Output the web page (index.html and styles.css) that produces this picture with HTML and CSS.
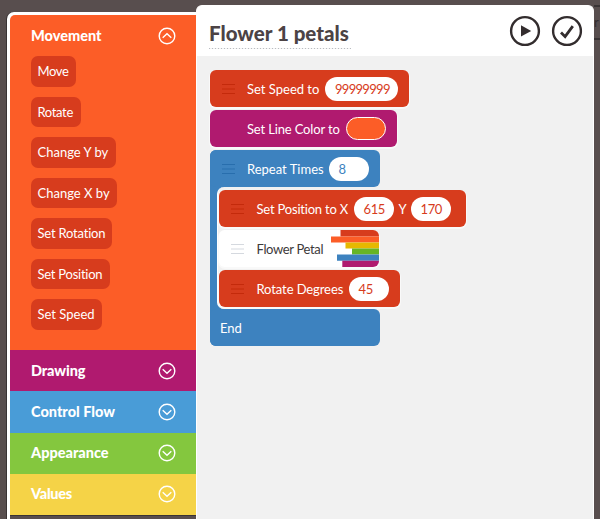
FILE: index.html
```
<!DOCTYPE html>
<html lang="en">
<head>
<meta charset="utf-8">
<title>Flower 1 petals</title>
<link rel="stylesheet" href="styles.css">
</head>
<body>
<svg class="defs" width="0" height="0">
  <symbol id="chevron" viewBox="0 0 18 18"><circle cx="9" cy="9" r="7.8"/><path d="M4.7 7.2 9 11.3l4.3-4.1"/></symbol>
  <symbol id="grip" viewBox="0 0 13 10"><path d="M0 .5h13M0 5h13M0 9.5h13"/></symbol>
</svg>
<div class="app">
  <aside class="sidebar">
    <section class="category movement">
      <h2 class="heading"><span>Movement</span><svg class="chevron up"><use href="#chevron"/></svg></h2>
      <div class="commands">
        <div class="command move">Move</div>
        <div class="command rotate">Rotate</div>
        <div class="command change-y">Change Y by</div>
        <div class="command change-x">Change X by</div>
        <div class="command set-rotation">Set Rotation</div>
        <div class="command set-position">Set Position</div>
        <div class="command set-speed">Set Speed</div>
      </div>
    </section>
    <section class="category drawing"><h2 class="heading"><span>Drawing</span><svg class="chevron"><use href="#chevron"/></svg></h2></section>
    <section class="category control"><h2 class="heading"><span>Control Flow</span><svg class="chevron"><use href="#chevron"/></svg></h2></section>
    <section class="category appearance"><h2 class="heading"><span>Appearance</span><svg class="chevron"><use href="#chevron"/></svg></h2></section>
    <section class="category values"><h2 class="heading"><span>Values</span><svg class="chevron"><use href="#chevron"/></svg></h2></section>
    <div class="sidebar-rest"></div>
  </aside>
  <main class="editor">
    <header class="toolbar">
      <h1 class="title">Flower 1 petals</h1>
      <svg class="action" viewBox="0 0 32 32"><circle cx="16" cy="16" r="13.9"/><path class="solid" d="M12 10.3v11.2L22.2 16z"/></svg>
      <svg class="action" viewBox="0 0 32 32"><circle cx="16" cy="16" r="13.9"/><path class="tick" d="m10 17.6 4.1 4.1 7.7-10.5"/></svg>
    </header>
    <div class="program">
      <div class="block red w-speed"><svg class="grip"><use href="#grip"/></svg><span class="label l-speed">Set Speed to</span><span class="field wide">99999999</span></div>
      <div class="block purple w-color"><span class="grip"></span><span class="label l-color">Set Line Color to</span><span class="field swatch"></span></div>
      <div class="loop">
        <div class="block blue w-repeat"><svg class="grip"><use href="#grip"/></svg><span class="label l-repeat">Repeat Times</span><span class="field">8</span></div>
        <div class="loop-body">
          <div class="block red w-position"><svg class="grip"><use href="#grip"/></svg><span class="label l-position">Set Position to X</span><span class="field">615</span><span class="label l-y">Y</span><span class="field">170</span></div>
          <div class="block white w-petal"><svg class="grip"><use href="#grip"/></svg><span class="label l-petal">Flower Petal</span>
            <svg class="stripes" viewBox="0 0 48 37" preserveAspectRatio="none"><path fill="#d73c1d" d="M9.5 0H48v6.4H9.5z"/><path fill="#fc5d27" d="M0 6.4h48v6H0z"/><path fill="#e6b800" d="M14.5 12.4H48v6.2H14.5z"/><path fill="#67b526" d="M21 18.6h27v6H21z"/><path fill="#3d82bf" d="M6 24.6h42v6.2H6z"/><path fill="#b01a6f" d="M11.3 30.8H48V37H11.3z"/></svg>
          </div>
          <div class="block red w-rotate"><svg class="grip"><use href="#grip"/></svg><span class="label l-rotate">Rotate Degrees</span><span class="field">45</span></div>
        </div>
        <div class="block blue end w-repeat"><span class="l-end">End</span></div>
      </div>
    </div>
  </main>
  <div class="backdrop"><span class="ghost">r</span></div>
</div>
</body>
</html>
```
FILE: styles.css
```
* { box-sizing: border-box; }
body {
  margin: 0;
  background: #584e4e;
  font-family: Lato, "Liberation Sans", sans-serif;
  font-variant-ligatures: none;
  color: #fff;
}
.defs { display: block; }
.app { display: flex; width: 600px; height: 519px; overflow: hidden; }

.sidebar {
  display: flex;
  flex-direction: column;
  flex: none;
  width: 189px;
  margin: 12px 0 0 7px;
  border: solid #fff;
  border-width: 3px 0 0 3px;
  border-radius: 7px 0 0 0;
  background: #fff;
  box-shadow: -1px 0 0 #393334;
}
.category { flex: none; height: 41.3px; padding: 0 20px 0 21px; }
.heading {
  display: flex;
  align-items: center;
  justify-content: space-between;
  height: 41px;
  margin: 0;
  font-size: 14.5px;
  font-weight: 900;
  line-height: 20px;
}
.chevron { width: 18px; height: 18px; fill: none; stroke: #fff; stroke-width: 1.4; }
.up { transform: rotate(180deg); }
.movement { height: 335px; background: #fc5d27; border-radius: 5px 0 0 0; }
.drawing { background: #b01a6f; }
.drawing .heading { letter-spacing: -0.1px; }
.control { background: #499cd7; }
.appearance { background: #84c73e; }
.values { background: #f5d347; }
.values .heading { letter-spacing: -0.3px; }
.sidebar-rest { flex: 1; background: #584e4e; border-top: 1px solid #393334; }
.commands { display: flex; flex-direction: column; align-items: flex-start; gap: 10px; }
.command {
  height: 30.5px;
  padding-left: 6.5px;
  border-radius: 7px;
  background: #d73c1d;
  font-size: 13px;
  line-height: 31px;
  white-space: nowrap;
}
.move { width: 45px; letter-spacing: -0.4px; }
.rotate { width: 50px; letter-spacing: -0.35px; }
.change-y { width: 85px; }
.change-x { width: 85.5px; }
.set-rotation { width: 81px; letter-spacing: -0.2px; }
.set-position { width: 79px; letter-spacing: -0.25px; }
.set-speed { width: 71px; }

.editor {
  flex: none;
  width: 398px;
  margin-top: 5px;
  border: 1px solid #fff;
  border-bottom: 0;
  border-radius: 6px 6px 0 0;
  background: #f1f1f1;
  overflow: hidden;
}
.toolbar {
  display: flex;
  align-items: flex-start;
  gap: 10px;
  height: 50px;
  padding: 9px 10px 0 12px;
  background: #fff;
}
.title {
  width: 142px;
  height: 34px;
  margin: 0 auto 0 0;
  background: repeating-linear-gradient(90deg, #b9bcc1 0 1px, #f4f4f4 1px 3px) bottom / 100% 1.5px no-repeat;
  color: #4c4345;
  font-size: 20.5px;
  font-weight: 900;
  line-height: 36px;
  white-space: nowrap;
}
.action { width: 32px; height: 32px; fill: none; stroke: #332d2e; stroke-width: 2.4; }
.solid { fill: #332d2e; stroke: none; }
.tick { stroke-width: 2.8; }

.program { display: flex; flex-direction: column; align-items: flex-start; gap: 3px; padding: 14px 0 0 13px; }
.block {
  display: flex;
  align-items: center;
  height: 37px;
  padding-left: 12px;
  border-radius: 6px;
  font-size: 13px;
  line-height: 20px;
  white-space: nowrap;
  box-shadow: 0 1px 0 1px #f9f9f9;
}
.red { --tone: #d73c1d; --line: #c42a0b; background: #d73c1d; }
.purple { background: #b01a6f; }
.blue { --tone: #3d82bf; --line: #286ead; background: #3d82bf; }
.white { --tone: #3d393a; --line: #d5d9df; background: #fff; color: #3d393a; }
.grip { flex: none; width: 13px; height: 10px; margin-right: 12px; stroke: var(--line); stroke-width: 1; }
.label { flex: none; }
.field {
  flex: none;
  width: 40px;
  height: 24px;
  padding-left: 9.5px;
  border-radius: 12px;
  background: #fff;
  color: var(--tone);
  letter-spacing: -0.4px;
  line-height: 24px;
}
.wide { width: 73px; padding-left: 10px; letter-spacing: -0.7px; }
.swatch { height: 23px; border: 1.5px solid #fff; background: #fc5d27; }
.w-speed { width: 199px; }
.w-color { width: 187px; }
.w-repeat { width: 169.5px; }
.w-position { width: 247px; }
.w-petal { width: 160px; overflow: hidden; }
.w-rotate { width: 180.5px; }
.l-speed { width: 78px; }
.l-color { width: 99px; letter-spacing: -0.15px; }
.l-repeat { width: 82px; }
.l-position { width: 98px; letter-spacing: -0.2px; padding-left: 0.5px; }
.l-y { width: 17px; padding-left: 4.5px; }
.l-petal { width: 75px; letter-spacing: -0.35px; padding-left: 0.5px; }
.l-rotate { width: 93px; letter-spacing: -0.1px; padding-left: 0.5px; }
.loop { border-radius: 6px; background: linear-gradient(90deg, #3d82bf 15px, transparent 15px); }
.loop .blue { box-shadow: none; }
.loop-body {
  display: flex;
  flex-direction: column;
  gap: 3px;
  width: 249px;
  margin-left: 7px;
  padding: 3px 0 2px 1px;
  border-left: 1px solid #fff;
  border-radius: 7px 0 0 7px;
  background: #f1f1f1;
}
.stripes { flex: none; width: 48px; height: 37px; }
.end { padding-left: 10px; }

.backdrop { flex: none; width: 6px; height: 35px; margin-top: 5px; border-top: 2px solid #393334; border-bottom: 2px solid #393334; }
.ghost { display: block; color: #332d2e; font-size: 13px; line-height: 31px; }
```
